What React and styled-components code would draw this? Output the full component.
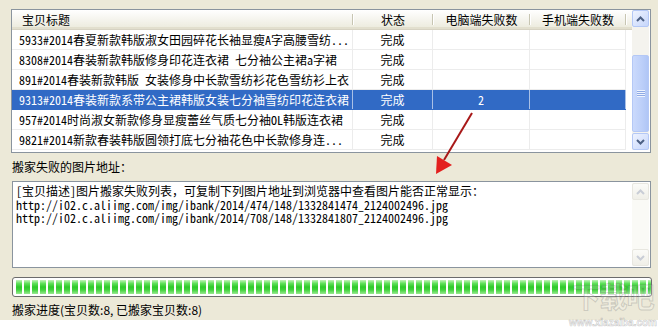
import React from "react";
import styled, { createGlobalStyle } from "styled-components";

const GlobalStyle = createGlobalStyle`
  html, body { margin: 0; padding: 0; background: #ffffff; }
  body { font-family: "Noto Sans CJK SC", "Noto Sans", sans-serif; }
`;

const CJK = `"Noto Sans Mono CJK SC", "Noto Sans CJK SC", "Liberation Mono", monospace`;
const UI = `"Noto Sans CJK SC", "Noto Sans", sans-serif`;

const Page = styled.div`
  position: relative;
  width: 663px;
  height: 328px;
  overflow: hidden;
  background: #ffffff;
`;

const Window = styled.div`
  width: 658px;
  height: 320px;
  box-sizing: border-box;
  background: #ece9d8;
  padding: 9px 7px 0 11px;
  display: flex;
  flex-direction: column;
  overflow: hidden;
`;

const ListView = styled.div`
  width: 640px;
  height: 144px;
  box-sizing: border-box;
  border: 1px solid #8a949e;
  background: #ffffff;
  display: flex;
`;

const Table = styled.div`
  width: 620px;
  display: flex;
  flex-direction: column;
`;

const HeaderRow = styled.div`
  display: flex;
  height: 20px;
  box-sizing: border-box;
  background: linear-gradient(#ffffff, #f3f2ea 60%, #ebeadb);
  border-bottom: 1px solid #d6d2c2;
  box-shadow: inset 0 -2px 0 #e2dfce;
`;

const HeaderCell = styled.div`
  position: relative;
  width: ${(p) => p.$w}px;
  box-sizing: border-box;
  display: flex;
  align-items: center;
  justify-content: ${(p) => (p.$left ? "flex-start" : "center")};
  padding-left: ${(p) => (p.$left ? "10px" : "0")};
  font-family: ${UI};
  font-size: 12px;
  color: #000;
  &::after {
    content: "";
    display: ${(p) => (p.$sep ? "block" : "none")};
    position: absolute;
    right: 0;
    top: 4px;
    bottom: 4px;
    width: 1px;
    background: #c7c5b2;
    box-shadow: 1px 0 0 #ffffff;
  }
`;

const Row = styled.div`
  display: flex;
  height: 20px;
  box-sizing: border-box;
  border-bottom: 1px solid ${(p) => (p.$sel ? "#316ac5" : "#ececec")};
  background: ${(p) => (p.$sel ? "#316ac5" : "transparent")};
  color: ${(p) => (p.$sel ? "#ffffff" : "#000000")};
  margin-right: 6px;
`;

const Cell = styled.div`
  width: ${(p) => p.$w}px;
  box-sizing: border-box;
  display: flex;
  align-items: center;
  justify-content: ${(p) => (p.$left ? "flex-start" : "center")};
  padding-left: ${(p) => (p.$left ? "7px" : "0")};
  border-right: 1px solid ${(p) => (p.$sel ? "#a9c0e6" : "#ececec")};
  font-family: ${CJK};
  font-size: 12px;
  white-space: nowrap;
  overflow: hidden;
  line-height: 19px;
`;

const ScrollBar = styled.div`
  width: 17px;
  height: ${(p) => p.$h}px;
  margin: 0 1px 0 0;
  display: flex;
  flex-direction: column;
  background: ${(p) => (p.$disabled ? "#fafaf6" : "#f4f3ee")};
`;

const ScrollButton = styled.div`
  width: 17px;
  height: 17px;
  box-sizing: border-box;
  border-radius: 2px;
  border: 1px solid ${(p) => (p.$disabled ? "#e8e7e0" : "#b4c8f6")};
  background: ${(p) =>
    p.$disabled
      ? "linear-gradient(#fbfbf8, #f0efe8)"
      : "linear-gradient(135deg, #eef3ff, #c6d6fb)"};
  display: flex;
  align-items: center;
  justify-content: center;
`;

const Track = styled.div`
  flex: 1;
  display: flex;
  flex-direction: column;
`;

const Thumb = styled.div`
  margin-top: 28px;
  height: 77px;
  box-sizing: border-box;
  border: 1px solid #b4c8f6;
  border-radius: 2px;
  background: linear-gradient(90deg, #cbdafc, #bccff9 60%, #b0c6f6);
  display: flex;
  align-items: center;
  justify-content: center;
`;

const Grip = styled.div`
  width: 8px;
  height: 7px;
  background: repeating-linear-gradient(
    #eef3fe 0,
    #eef3fe 1px,
    #8faae5 1px,
    #8faae5 2px
  );
`;

const Label = styled.div`
  margin-top: 7px;
  height: 21px;
  font-family: ${UI};
  font-size: 12px;
  line-height: 14px;
  color: #000;
  padding-left: 1px;
`;

const TextBox = styled.div`
  width: 639px;
  height: 87px;
  margin-left: 1px;
  box-sizing: border-box;
  border: 1px solid #8a949e;
  background: #ffffff;
  display: flex;
  padding: 1px 0;
`;

const TextContent = styled.div`
  flex: 1;
  padding: 1px 0 0 3px;
  font-family: ${CJK};
  font-size: 12px;
  color: #000;
`;

const TextLine = styled.div`
  height: ${(p) => p.$h}px;
  line-height: ${(p) => p.$h}px;
  white-space: nowrap;
`;

const Progress = styled.div`
  margin-top: 9px;
  margin-left: 1px;
  width: 640px;
  height: 20px;
  box-sizing: border-box;
  border: 1px solid #6b6b6b;
  border-radius: 3px;
  background: #ffffff;
  padding: 2px 2px 2px 3px;
  display: flex;
  gap: 2px;
  overflow: hidden;
`;

const Block = styled.div`
  flex: none;
  width: 6px;
  height: 14px;
  background: linear-gradient(
    #c4f3bc 0%,
    #5fe05a 25%,
    #2ec92b 50%,
    #3fd23b 70%,
    #9ae992 100%
  );
`;

const Status = styled.div`
  margin-top: 6px;
  padding-left: 1px;
  font-family: ${UI};
  font-size: 12px;
  line-height: 14px;
  color: #000;
`;

const Overlay = styled.svg`
  position: absolute;
  left: 0;
  top: 0;
  pointer-events: none;
`;

const Watermark = styled.div`
  position: absolute;
  right: 1px;
  bottom: 0;
  width: 98px;
  display: flex;
  flex-direction: column;
  align-items: center;
  pointer-events: none;
`;

const WmBig = styled.div`
  font-family: ${UI};
  font-size: 28px;
  line-height: 41px;
  height: 41px;
  font-weight: 700;
  color: rgba(255, 255, 255, 0.2);
  -webkit-text-stroke: 1px rgba(120, 120, 120, 0.3);
  letter-spacing: -1px;
`;

const WmSmall = styled.div`
  font-family: "Liberation Sans", sans-serif;
  font-size: 10px;
  line-height: 11px;
  height: 11px;
  font-weight: 700;
  color: rgba(255, 255, 255, 0.3);
  -webkit-text-stroke: 0.6px rgba(120, 120, 120, 0.4);
`;

const Chevron = ({ up, disabled }) => (
  <svg width="9" height="6" viewBox="0 0 9 6">
    <path
      d={up ? "M1 5 L4.5 1.5 L8 5" : "M1 1 L4.5 4.5 L8 1"}
      fill="none"
      stroke={disabled ? "#c9cdd6" : "#4d6185"}
      strokeWidth="2"
    />
  </svg>
);

const cols = [
  { key: "title", label: "宝贝标题", w: 341, left: true },
  { key: "state", label: "状态", w: 80 },
  { key: "pc", label: "电脑端失败数", w: 97 },
  { key: "mobile", label: "手机端失败数", w: 96 },
];

const rows = [
  { title: "5933#2014春夏新款韩版淑女田园碎花长袖显瘦A字高腰雪纺...", state: "完成", pc: "", mobile: "" },
  { title: "8308#2014春装新款韩版修身印花连衣裙 七分袖公主裙a字裙", state: "完成", pc: "", mobile: "" },
  { title: "891#2014春装新款韩版 女装修身中长款雪纺衫花色雪纺衫上衣", state: "完成", pc: "", mobile: "" },
  { title: "9313#2014春装新款系带公主裙韩版女装七分袖雪纺印花连衣裙", state: "完成", pc: "2", mobile: "", sel: true },
  { title: "957#2014时尚淑女新款修身显瘦蕾丝气质七分袖OL韩版连衣裙", state: "完成", pc: "", mobile: "" },
  { title: "9821#2014新款春装韩版圆领打底七分袖花色中长款修身连...", state: "完成", pc: "", mobile: "" },
];

export default function App() {
  return (
    <>
      <GlobalStyle />
      <Page>
        <Window>
          <ListView>
            <Table>
              <HeaderRow>
                {cols.map((c) => (
                  <HeaderCell key={c.key} $w={c.w} $left={c.left} $sep>
                    {c.label}
                  </HeaderCell>
                ))}
                <HeaderCell $w={6} />
              </HeaderRow>
              {rows.map((r, i) => (
                <Row key={i} $sel={r.sel}>
                  {cols.map((c) => (
                    <Cell key={c.key} $w={c.w} $left={c.left} $sel={r.sel}>
                      {r[c.key]}
                    </Cell>
                  ))}
                </Row>
              ))}
            </Table>
            <ScrollBar $h={140}>
              <ScrollButton>
                <Chevron up />
              </ScrollButton>
              <Track>
                <Thumb>
                  <Grip />
                </Thumb>
              </Track>
              <ScrollButton>
                <Chevron />
              </ScrollButton>
            </ScrollBar>
          </ListView>

          <Label>搬家失败的图片地址：</Label>

          <TextBox>
            <TextContent>
              <TextLine $h={14}>[宝贝描述]图片搬家失败列表，可复制下列图片地址到浏览器中查看图片能否正常显示：</TextLine>
              <TextLine $h={13}>http://i02.c.aliimg.com/img/ibank/2014/474/148/1332841474_2124002496.jpg</TextLine>
              <TextLine $h={13}>http://i02.c.aliimg.com/img/ibank/2014/708/148/1332841807_2124002496.jpg</TextLine>
            </TextContent>
            <ScrollBar $h={83} $disabled>
              <ScrollButton $disabled>
                <Chevron up disabled />
              </ScrollButton>
              <Track />
              <ScrollButton $disabled>
                <Chevron disabled />
              </ScrollButton>
            </ScrollBar>
          </TextBox>

          <Progress>
            {Array.from({ length: 80 }, (_, i) => (
              <Block key={i} />
            ))}
          </Progress>

          <Status>搬家进度(宝贝数:8, 已搬家宝贝数:8)</Status>
        </Window>

        <Watermark>
          <WmBig>下载吧</WmBig>
          <WmSmall>www.xiazaiba.com</WmSmall>
        </Watermark>

        <Overlay width="663" height="328" viewBox="0 0 663 328">
          <line x1="472" y1="113" x2="444" y2="160" stroke="#a81818" strokeWidth="2" />
          <polygon points="436,174 437,156 452,165" fill="#e3201e" />
        </Overlay>
      </Page>
    </>
  );
}
